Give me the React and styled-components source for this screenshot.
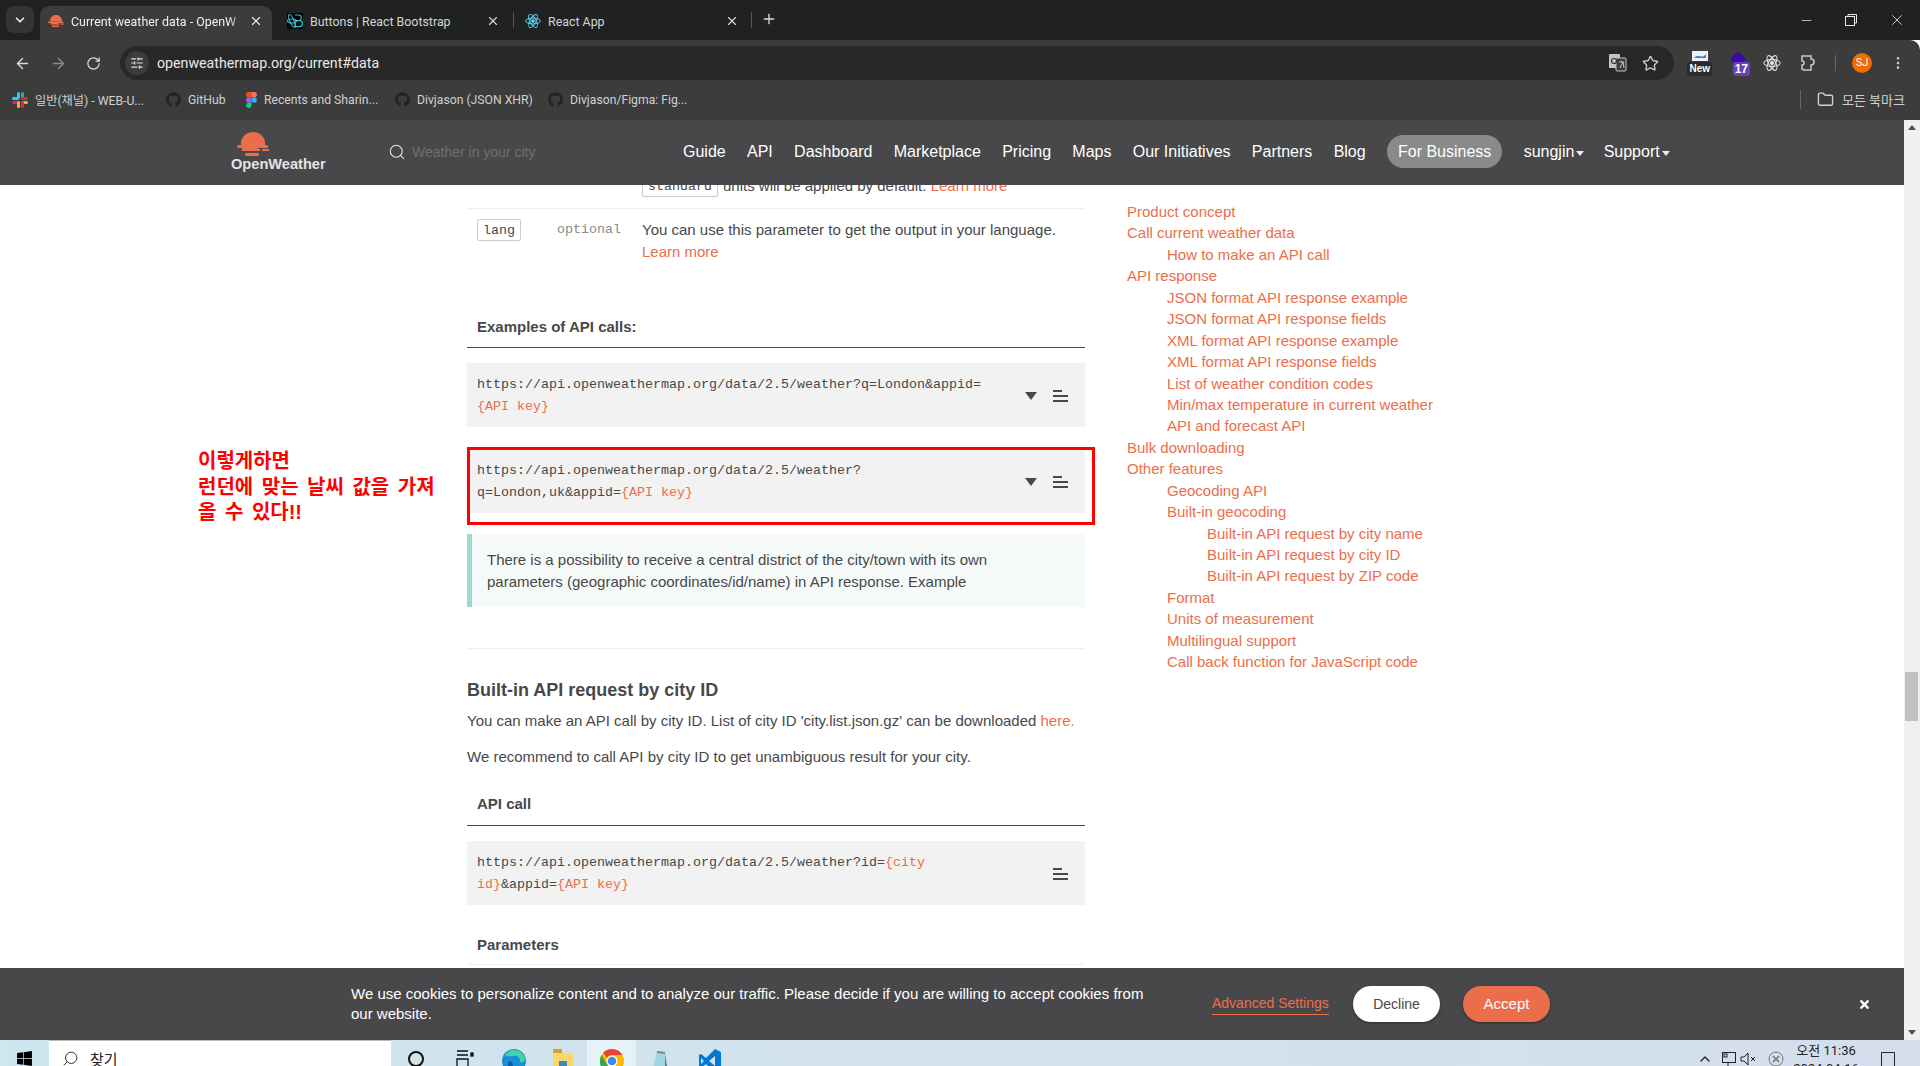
import React from 'react';
import styled, { createGlobalStyle } from 'styled-components';
import { ArrowLeft, ArrowRight, RotateCw, Star, Search, X, Plus, ChevronDown, ChevronUp, Minus, MoreVertical, Folder, SlidersHorizontal } from 'lucide-react';
import { FaGithub, FaWindows, FaTimes } from 'react-icons/fa';

const sans = '"Liberation Sans", Arial, "Noto Sans CJK KR", sans-serif';
const ui = 'Roboto, "Noto Sans CJK KR", sans-serif';
const mono = '"Liberation Mono", "Courier New", monospace';
const orange = '#eb6e4b';

const GlobalStyle = createGlobalStyle`
  html, body { margin: 0; padding: 0; height: 100%; overflow: hidden; background: #fff; }
  * { box-sizing: border-box; }
  #root { height: 1066px; }
`;

const Shell = styled.div`
  display: flex;
  flex-direction: column;
  height: 1066px;
  width: 1920px;
  overflow: hidden;
  font-family: ${sans};
`;

/* browser chrome */
const TabStrip = styled.div`
  display: flex;
  align-items: flex-end;
  height: 40px;
  flex: none;
  padding-left: 6px;
  background: #202221;
  color: #e8e8e8;
`;
const TabListBtn = styled.div`
  width: 28px;
  height: 27px;
  margin: 0 6px 7px 0;
  border-radius: 8px;
  background: #333534;
  display: flex;
  align-items: center;
  justify-content: center;
`;
const Tab = styled.div`
  display: flex;
  align-items: center;
  width: ${p => p.$w}px;
  height: 34px;
  padding: 1px ${p => p.$right}px 5px ${p => p.$left}px;
  font: 12.4px ${ui};
  border-radius: 9px 9px 0 0;
  background: ${p => (p.$active ? '#3c3c3c' : 'transparent')};
  color: ${p => (p.$active ? '#f0f0f0' : '#d4d4d4')};
`;
const TabTitle = styled.span`
  flex: 1;
  margin-left: 7px;
  white-space: nowrap;
  overflow: hidden;
  ${p => p.$fade && 'mask-image: linear-gradient(90deg, #000 88%, transparent 100%);'}
`;
const TabSep = styled.div`
  width: 1px;
  height: 16px;
  margin-bottom: 12px;
  background: #555;
`;
const NewTab = styled.div`
  width: 32px;
  height: 34px;
  padding: 5px 0 0 9px;
  margin-right: auto;
`;
const WinControls = styled.div`
  display: flex;
  align-self: flex-start;
  align-items: center;
  gap: 30px;
  height: 40px;
  padding-right: 14px;
`;

const Toolbar = styled.div`
  display: flex;
  align-items: flex-start;
  height: 46px;
  flex: none;
  padding: 6px 0 0 14px;
  background: #3c3c3c;
  border-radius: 0 10px 0 0;
`;
const NavIcon = styled.div`
  width: 36px;
  height: 34px;
  display: flex;
  align-items: center;
  color: ${p => (p.$dim ? '#8a8a8a' : '#dcdcdc')};
`;
const Omnibox = styled.div`
  display: flex;
  align-items: center;
  width: 1554px;
  height: 34px;
  margin-left: -2px;
  padding: 0 15px 0 5px;
  border-radius: 17px;
  background: #282828;
`;
const SiteBtn = styled.div`
  width: 24px;
  height: 24px;
  border-radius: 50%;
  background: #3c3c3c;
  display: flex;
  align-items: center;
  justify-content: center;
  color: #ddd;
`;
const Url = styled.span`
  flex: 1;
  margin-left: 8px;
  font: 14.2px ${ui};
  color: #e8e8e8;
`;
const OmniIcons = styled.div`
  display: flex;
  align-items: center;
  gap: 15px;
  color: #c8c8c8;
`;
const ExtIcons = styled.div`
  display: flex;
  align-items: center;
  height: 34px;
  color: #c8c8c8;
`;
const ExtSlot = styled.div`
  display: flex;
  margin-left: ${p => p.$ml}px;
`;
const ExtBox = styled.div`
  position: relative;
  width: 24px;
  height: 24px;
  display: flex;
  align-items: flex-start;
  justify-content: center;
`;
const ExtBadge = styled.span`
  position: absolute;
  bottom: -1px;
  right: ${p => p.$right}px;
  padding: 0 2px;
  border-radius: 3px;
  font: bold ${p => p.$size}px/14px ${sans};
  color: #fff;
  background: ${p => p.$bg};
`;
const ToolbarSep = styled.div`
  width: 1px;
  height: 16px;
  background: #666;
`;
const Avatar = styled.div`
  width: 20px;
  height: 20px;
  border-radius: 50%;
  background: #ef6c00;
  color: #fff;
  font: 11px/20px ${ui};
  text-align: center;
`;

const BookmarkBar = styled.div`
  display: flex;
  align-items: center;
  height: 34px;
  flex: none;
  padding: 0 15px 7px 12px;
  background: #3c3c3c;
  color: #d0d0d0;
  font: 12.2px ${ui};
`;
const Bookmark = styled.div`
  display: flex;
  align-items: center;
  gap: 7px;
  width: ${p => p.$w}px;
  white-space: nowrap;
`;
const AllBookmarks = styled.div`
  display: flex;
  align-items: center;
  gap: 8px;
  margin-left: auto;
  padding-left: 16px;
  font-size: 13px;
  border-left: 1px solid #666;
`;

/* page */
const Page = styled.div`
  display: flex;
  height: 920px;
  flex: none;
`;
const PageColumn = styled.div`
  display: flex;
  flex-direction: column;
  width: 1904px;
`;
const Scrollbar = styled.div`
  display: flex;
  flex-direction: column;
  align-items: center;
  justify-content: space-between;
  width: 16px;
  padding: 5px 0;
  position: relative;
  background: #f0f0f0;
`;
const Thumb = styled.div`
  position: absolute;
  top: 552px;
  left: 1px;
  width: 13px;
  height: 49px;
  background: #c0c0c0;
`;
const Arrow = styled.i`
  width: 0;
  height: 0;
  border-left: 4px solid transparent;
  border-right: 4px solid transparent;
  ${p => (p.$up ? 'border-bottom: 5px solid #505050;' : 'border-top: 5px solid #505050;')}
`;

const Nav = styled.nav`
  display: flex;
  align-items: center;
  height: 65px;
  flex: none;
  padding: 0 0 2px 231px;
  background: #48484a;
  color: #fff;
  font-size: 16px;
`;
const Logo = styled.div`
  display: flex;
  flex-direction: column;
  align-items: flex-start;
  width: 94px;
  padding-left: 6px;
`;
const LogoText = styled.span`
  margin: 1px 0 0 -6px;
  font: bold 14.6px/15px ${sans};
  color: #e4e4e4;
`;
const NavSearch = styled.div`
  display: flex;
  align-items: center;
  gap: 6px;
  width: 295px;
  margin-left: 63px;
  color: #e8e8e8;
`;
const SearchHint = styled.span`
  font-size: 14px;
  color: #6f6f71;
`;
const NavLinks = styled.div`
  display: flex;
  align-items: center;
  gap: 21.3px;
`;
const Pill = styled.div`
  display: flex;
  align-items: center;
  height: 33px;
  padding: 0 11px;
  border-radius: 17px;
  background: #8a8a8b;
`;
const Drop = styled.span`
  display: inline-flex;
  align-items: center;
  gap: 2px;
  & + & {
    margin-left: -2px;
  }
`;
const Caret = styled.i`
  width: 0;
  height: 0;
  margin-top: 3px;
  border-left: 4px solid transparent;
  border-right: 4px solid transparent;
  border-top: 5px solid #eee;
`;

const Content = styled.div`
  display: flex;
  flex: 1;
  overflow: hidden;
  color: #48484a;
  font-size: 15px;
  line-height: 22px;
`;
const NoteColumn = styled.div`
  width: 467px;
  flex: none;
  padding: 264px 0 0 198px;
  color: #f00;
  font: bold 20px/25.5px ${sans};
  word-spacing: 3px;
`;
const Main = styled.main`
  width: 618px;
  flex: none;
`;
const ClippedRow = styled.div`
  display: flex;
  align-items: flex-end;
  gap: 5px;
  height: 24px;
  padding: 0 0 11px 175px;
  border-bottom: 1px solid #eee;
  overflow: hidden;
`;
const ParamRow = styled.div`
  display: flex;
  padding: 10px 0 0 10px;
`;
const ParamName = styled.code`
  flex: none;
  height: 22px;
  padding: 0 5px;
  border: 1px solid #ccc;
  border-radius: 2px;
  font: 13.33px/21px ${mono};
  color: #48484a;
  background: #fff;
`;
const ParamKind = styled.span`
  flex: none;
  width: 85px;
  margin-left: 36px;
  font: 13.33px/22px ${mono};
  color: #8a8a8b;
`;
const A = styled.a`
  color: ${orange};
`;
const SubLabel = styled.div`
  margin-top: ${p => p.$top}px;
  padding: 0 0 ${p => p.$bottom}px 10px;
  font-weight: bold;
  border-bottom: 1px solid ${p => (p.$faint ? '#eee' : '#48484a')};
`;
const Code = styled.div`
  display: flex;
  align-items: center;
  height: 64px;
  margin-top: ${p => p.$top}px;
  padding: 1px 17px 0 10px;
  background: #f2f2f2;
  font: 13.33px/21.5px ${mono};
  color: #48484a;
`;
const CodeText = styled.div`
  flex: 1;
`;
const Key = styled.span`
  color: ${orange};
`;
const CodeDrop = styled.i`
  width: 0;
  height: 0;
  margin-right: 16px;
  border-left: 6px solid transparent;
  border-right: 6px solid transparent;
  border-top: 8px solid #48484a;
`;
const Highlighted = styled.div`
  position: relative;
  margin-top: 22px;
`;
const RedBox = styled.div`
  position: absolute;
  top: -2px;
  left: 0;
  right: -10px;
  height: 78px;
  border: 3px solid #f00;
`;
const Callout = styled.div`
  height: 73px;
  margin-top: 21px;
  padding: 15px 0 0 15px;
  border-left: 5px solid #9fd8d0;
  background: #f5faf9;
`;
const Rule = styled.hr`
  height: 1px;
  margin: 41px 0 0;
  border: 0;
  background: #eee;
`;
const Heading = styled.h3`
  margin: 30px 0 0;
  font: bold 18px/22px ${sans};
`;
const Para = styled.p`
  margin: ${p => p.$top}px 0 0;
`;
const Toc = styled.aside`
  padding: 16px 0 0 42px;
  font-size: 15px;
  line-height: 21.43px;
`;
const TocLink = styled.a`
  display: block;
  padding-left: ${p => p.$level * 40}px;
  color: ${orange};
`;

const Cookie = styled.div`
  display: flex;
  align-items: center;
  height: 72px;
  flex: none;
  padding-left: 351px;
  background: #48484a;
  color: #fff;
`;
const CookieText = styled.div`
  width: 861px;
  padding-right: 60px;
  font-size: 15px;
  line-height: 20px;
`;
const Advanced = styled.a`
  width: 141px;
  margin-top: 2px;
  font-size: 14px;
  color: ${orange};
  span {
    display: inline-block;
    padding-bottom: 3px;
    border-bottom: 1px solid ${orange};
  }
`;
const CookieBtn = styled.div`
  width: 87px;
  height: 36px;
  margin-right: 23px;
  border-radius: 18px;
  text-align: center;
  font-size: ${p => (p.$primary ? 15 : 14)}px;
  line-height: 36px;
  box-shadow: 0 1px 3px rgba(0, 0, 0, 0.4);
  color: ${p => (p.$primary ? '#fff' : '#48484a')};
  background: ${p => (p.$primary ? orange : '#fff')};
`;
const CookieClose = styled.div`
  margin-left: 285px;
  display: flex;
  color: #fff;
`;

/* windows taskbar, cut off by the bottom of the photo */
const Taskbar = styled.div`
  display: flex;
  align-items: flex-start;
  height: 26px;
  flex: none;
  overflow: hidden;
  background: linear-gradient(90deg, #cfe6ef, #d2e2ec 50%, #d5deec);
`;
const Start = styled.div`
  width: 49px;
  padding: 10px 0 0 16px;
  color: #000;
`;
const TaskSearch = styled.div`
  display: flex;
  align-items: flex-start;
  gap: 11px;
  width: 342px;
  height: 40px;
  padding: 9px 0 0 13px;
  background: #fff;
  border-top: 1px solid #bbb;
  font: 15px/21px ${ui};
  color: #222;
`;
const TaskApp = styled.div`
  width: 49px;
  height: 40px;
  padding-top: 9px;
  text-align: center;
  background: ${p => (p.$on ? '#e6f2f7' : 'transparent')};
`;
const Tray = styled.div`
  display: flex;
  align-items: flex-start;
  margin-left: auto;
  padding: 11px 24px 0 0;
  color: #222;
`;
const TrayItem = styled.div`
  display: flex;
  margin-right: ${p => p.$mr}px;
`;
const Clock = styled.div`
  width: 84px;
  margin: -9px 12px 0 0;
  text-align: center;
  font: 13px/18px ${ui};
`;

const tocItems = [
  ['Product concept', 0], ['Call current weather data', 0], ['How to make an API call', 1],
  ['API response', 0], ['JSON format API response example', 1], ['JSON format API response fields', 1],
  ['XML format API response example', 1], ['XML format API response fields', 1],
  ['List of weather condition codes', 1], ['Min/max temperature in current weather', 1],
  ['API and forecast API', 1], ['Bulk downloading', 0], ['Other features', 0],
  ['Geocoding API', 1], ['Built-in geocoding', 1], ['Built-in API request by city name', 2],
  ['Built-in API request by city ID', 2], ['Built-in API request by ZIP code', 2],
  ['Format', 1], ['Units of measurement', 1], ['Multilingual support', 1],
  ['Call back function for JavaScript code', 1],
];

const navItems = ['Guide', 'API', 'Dashboard', 'Marketplace', 'Pricing', 'Maps', 'Our Initiatives', 'Partners', 'Blog'];

function SunLogo({ h = 24, w = 32 }) {
  return (
    <svg width={w} height={h} viewBox="0 0 32 24">
      <path fill={orange} d="M16 0c6 0 11 4 12 10v3H4v-3C5 4 10 0 16 0z" />
      <rect x="0" y="13" width="31" height="3" rx="1.5" fill={orange} />
      <rect x="5" y="16" width="16" height="3" fill={orange} />
      <rect x="18" y="17" width="5" height="2" fill={orange} />
      <rect x="25" y="17" width="7" height="2" fill={orange} />
      <rect x="8" y="21" width="14" height="3" rx="1" fill={orange} />
    </svg>
  );
}

function ReactIcon({ color = '#61dafb', size = 16 }) {
  return (
    <svg width={size} height={size} viewBox="0 0 24 24" fill="none" stroke={color} strokeWidth="1.4">
      <circle cx="12" cy="12" r="2" fill={color} />
      <ellipse cx="12" cy="12" rx="11" ry="4.5" />
      <ellipse cx="12" cy="12" rx="11" ry="4.5" transform="rotate(60 12 12)" />
      <ellipse cx="12" cy="12" rx="11" ry="4.5" transform="rotate(120 12 12)" />
    </svg>
  );
}

function BootstrapIcon() {
  return (
    <svg width="16" height="16" viewBox="0 0 16 16">
      <rect width="16" height="16" fill="#000" />
      <g fill="none" stroke="#35c3dc" strokeWidth="1.1">
        <ellipse cx="5" cy="8" rx="4.5" ry="2" />
        <ellipse cx="5" cy="8" rx="7" ry="2" transform="rotate(65 5 8)" />
        <path d="M8 2h3.5a2.8 2.8 0 0 1 0 5.6H8m0 0h4.5a3 3 0 0 1 0 6H8z" />
      </g>
    </svg>
  );
}

function SlackIcon() {
  return (
    <svg width="16" height="16" viewBox="0 0 16 16">
      <rect x="5" y="0" width="3" height="7" rx="1.5" fill="#36c5f0" />
      <rect x="0" y="5" width="7" height="3" rx="1.5" fill="#36c5f0" />
      <rect x="9" y="0" width="3" height="7" rx="1.5" fill="#2eb67d" />
      <rect x="9" y="5" width="7" height="3" rx="1.5" fill="#e01e5a" />
      <rect x="0" y="9" width="7" height="3" rx="1.5" fill="#e01e5a" />
      <rect x="5" y="9" width="3" height="7" rx="1.5" fill="#ecb22e" />
      <rect x="9" y="9" width="7" height="3" rx="1.5" fill="#ecb22e" />
      <rect x="9" y="9" width="3" height="7" rx="1.5" fill="#e01e5a" />
    </svg>
  );
}

function FigmaIcon() {
  return (
    <svg width="11" height="16" viewBox="0 0 12 18">
      <path fill="#f24e1e" d="M0 3a3 3 0 0 1 3-3h3v6H3a3 3 0 0 1-3-3z" />
      <path fill="#ff7262" d="M6 0h3a3 3 0 0 1 0 6H6z" />
      <path fill="#a259ff" d="M0 9a3 3 0 0 1 3-3h3v6H3a3 3 0 0 1-3-3z" />
      <circle cx="9" cy="9" r="3" fill="#1abcfe" />
      <path fill="#0acf83" d="M0 15a3 3 0 0 1 3-3h3v3a3 3 0 0 1-6 0z" />
    </svg>
  );
}

function TranslateIcon() {
  return (
    <svg width="18" height="18" viewBox="0 0 18 18">
      <rect x="0" y="0" width="11" height="14" rx="1" fill="#c4c4c4" />
      <rect x="7" y="4" width="10" height="13" rx="1" fill="#3c3c3c" stroke="#c4c4c4" />
      <circle cx="5" cy="7" r="2.5" fill="none" stroke="#333" strokeWidth="1.2" />
      <path d="M10 8h5M12.5 7v1M11 14l3-6 1 6" stroke="#c4c4c4" fill="none" />
    </svg>
  );
}

function PuzzleIcon() {
  return (
    <svg width="18" height="18" viewBox="0 0 18 18" fill="none" stroke="#c8c8c8" strokeWidth="1.5">
      <path d="M2 2h9v3a2.2 2.2 0 0 1 0 6v5H4l-2-1v-4a2 2 0 0 0 0-4z" />
    </svg>
  );
}

function MenuLines() {
  return (
    <svg width="15" height="12" viewBox="0 0 15 12">
      <rect x="0" y="0" width="9" height="2" fill="#48484a" />
      <rect x="0" y="5" width="15" height="2" fill="#48484a" />
      <rect x="0" y="10" width="15" height="2" fill="#48484a" />
    </svg>
  );
}

function EdgeIcon() {
  return (
    <svg width="24" height="24" viewBox="0 0 24 24">
      <circle cx="12" cy="12" r="12" fill="#1a8fd6" />
      <path fill="#41d3a2" d="M3 6a11 11 0 0 1 20 4c0 3-3 4-5 3 1-4-3-7-7-6-3 0-6 1-8-1z" />
      <path fill="#0c5aa6" d="M10 13c0 5 4 8 8 7l-3 3C8 25 4 18 7 12z" />
    </svg>
  );
}

function FolderApp() {
  return (
    <svg width="22" height="24" viewBox="0 0 22 24">
      <rect x="1" y="0" width="9" height="5" fill="#d9a227" />
      <rect x="1" y="4" width="20" height="20" fill="#fbd66a" />
      <rect x="7" y="12" width="8" height="12" fill="#3b87c4" />
    </svg>
  );
}

function ChromeIcon() {
  return (
    <svg width="24" height="24" viewBox="0 0 24 24">
      <circle cx="12" cy="12" r="12" fill="#fbbc04" />
      <path fill="#ea4335" d="M12 0a12 12 0 0 1 10.4 6H12a6 6 0 0 0-5.2 3L3.3 3.6A12 12 0 0 1 12 0z" />
      <path fill="#34a853" d="M1.6 6l5.2 9a6 6 0 0 0 5.2 3l-3.6 5.7A12 12 0 0 1 1.6 6z" />
      <circle cx="12" cy="12" r="5.5" fill="#fff" />
      <circle cx="12" cy="12" r="4.3" fill="#4285f4" />
    </svg>
  );
}

function NotepadApp() {
  return (
    <svg width="24" height="24" viewBox="0 0 24 24">
      <path fill="#9fd6e0" d="M3 24 8 2l8 1 3 21z" />
      <path fill="#7a8b90" d="M8 2l8 1v2L8 4z" />
      <path fill="#5d7d86" d="M16 5l3 19h-3z" />
    </svg>
  );
}

function VsCodeIcon() {
  return (
    <svg width="24" height="24" viewBox="0 0 24 24">
      <path fill="#0078d4" d="M17 0l6 3v18l-6 3-9-9-5 4-2-1V6l2-1 5 4zM17 7l-6 5 6 5zM3 9v6l3-3z" />
    </svg>
  );
}

export default function App() {
  return (
    <Shell>
      <GlobalStyle />
      <TabStrip>
        <TabListBtn><ChevronDown size={14} color="#e8e8e8" strokeWidth={3} /></TabListBtn>
        <Tab $active $w={232} $left={8} $right={9}>
          <SunLogo h={12} w={16} />
          <TabTitle $fade>Current weather data - OpenW</TabTitle>
          <X size={14} />
        </Tab>
        <Tab $w={241} $left={15} $right={13}>
          <BootstrapIcon />
          <TabTitle>Buttons | React Bootstrap</TabTitle>
          <X size={14} />
        </Tab>
        <TabSep />
        <Tab $w={237} $left={11} $right={12}>
          <ReactIcon />
          <TabTitle>React App</TabTitle>
          <X size={14} />
        </Tab>
        <TabSep />
        <NewTab><Plus size={16} color="#ddd" /></NewTab>
        <WinControls>
          <Minus size={15} strokeWidth={1.2} />
          <svg width="14" height="14" viewBox="0 0 14 14" fill="none" stroke="#e8e8e8">
            <rect x="1.5" y="3.5" width="9" height="9" />
            <path d="M4 3V1.5h8.5V10H11" />
          </svg>
          <X size={18} strokeWidth={1.1} />
        </WinControls>
      </TabStrip>

      <Toolbar>
        <NavIcon><ArrowLeft size={17} /></NavIcon>
        <NavIcon $dim><ArrowRight size={17} /></NavIcon>
        <NavIcon><RotateCw size={15} /></NavIcon>
        <Omnibox>
          <SiteBtn><SlidersHorizontal size={14} /></SiteBtn>
          <Url>openweathermap.org/current#data</Url>
          <OmniIcons>
            <TranslateIcon />
            <Star size={17} />
          </OmniIcons>
        </Omnibox>
        <ExtIcons>
          <ExtSlot $ml={14}>
            <ExtBox>
              <svg width="16" height="10" viewBox="0 0 16 10"><rect width="16" height="10" fill="#eef" /><path d="M2 7c4-5 8 2 12-4v4H2z" fill="#3a7fc4" /></svg>
              <ExtBadge $bg="#2a2a2a" $right={0} $size={10}>New</ExtBadge>
            </ExtBox>
          </ExtSlot>
          <ExtSlot $ml={14}>
            <ExtBox>
              <svg width="18" height="18" viewBox="0 0 18 18"><path d="M9 0l8 8-8 8-8-8z" fill="#3d0a9e" /></svg>
              <ExtBadge $bg="#6a3fc0" $right={0} $size={12}>17</ExtBadge>
            </ExtBox>
          </ExtSlot>
          <ExtSlot $ml={13}><ReactIcon color="#e4e4e4" size={18} /></ExtSlot>
          <ExtSlot $ml={19}><PuzzleIcon /></ExtSlot>
          <ExtSlot $ml={17}><ToolbarSep /></ExtSlot>
          <ExtSlot $ml={16}><Avatar>SJ</Avatar></ExtSlot>
          <ExtSlot $ml={18}><MoreVertical size={16} /></ExtSlot>
        </ExtIcons>
      </Toolbar>

      <BookmarkBar>
        <Bookmark $w={154}><SlackIcon /><span>일반(채널) - WEB-U...</span></Bookmark>
        <Bookmark $w={80}><FaGithub size={15} color="#222" /><span>GitHub</span></Bookmark>
        <Bookmark $w={149}><FigmaIcon /><span>Recents and Sharin...</span></Bookmark>
        <Bookmark $w={153}><FaGithub size={15} color="#222" /><span>Divjason (JSON XHR)</span></Bookmark>
        <Bookmark><FaGithub size={15} color="#222" /><span>Divjason/Figma: Fig...</span></Bookmark>
        <AllBookmarks><Folder size={17} /><span>모든 북마크</span></AllBookmarks>
      </BookmarkBar>

      <Page>
        <PageColumn>
          <Nav>
            <Logo>
              <SunLogo />
              <LogoText>OpenWeather</LogoText>
            </Logo>
            <NavSearch>
              <Search size={18} strokeWidth={1.4} />
              <SearchHint>Weather in your city</SearchHint>
            </NavSearch>
            <NavLinks>
              {navItems.map(item => <span key={item}>{item}</span>)}
              <Pill>For Business</Pill>
              <Drop>sungjin<Caret /></Drop>
              <Drop>Support<Caret /></Drop>
            </NavLinks>
          </Nav>

          <Content>
            <NoteColumn>
              이렇게하면<br />
              런던에 맞는 날씨 값을 가져<br />
              올 수 있다!!
            </NoteColumn>
            <Main>
              <ClippedRow>
                <ParamName>standard</ParamName>
                <span>units will be applied by default. <A>Learn more</A></span>
              </ClippedRow>
              <ParamRow>
                <ParamName>lang</ParamName>
                <ParamKind>optional</ParamKind>
                <div>
                  You can use this parameter to get the output in your language.<br />
                  <A>Learn more</A>
                </div>
              </ParamRow>
              <SubLabel $top={53} $bottom={9}>Examples of API calls:</SubLabel>
              <Code $top={15}>
                <CodeText>
                  https://api.openweathermap.org/data/2.5/weather?q=London&amp;appid=<br />
                  <Key>{'{API key}'}</Key>
                </CodeText>
                <CodeDrop />
                <MenuLines />
              </Code>
              <Highlighted>
                <Code $top={0}>
                  <CodeText>
                    https://api.openweathermap.org/data/2.5/weather?<br />
                    q=London,uk&amp;appid=<Key>{'{API key}'}</Key>
                  </CodeText>
                  <CodeDrop />
                  <MenuLines />
                </Code>
                <RedBox />
              </Highlighted>
              <Callout>
                There is a possibility to receive a central district of the city/town with its own<br />
                parameters (geographic coordinates/id/name) in API response. Example
              </Callout>
              <Rule />
              <Heading>Built-in API request by city ID</Heading>
              <Para $top={9}>You can make an API call by city ID. List of city ID 'city.list.json.gz' can be downloaded <A>here.</A></Para>
              <Para $top={14}>We recommend to call API by city ID to get unambiguous result for your city.</Para>
              <SubLabel $top={25} $bottom={10}>API call</SubLabel>
              <Code $top={15}>
                <CodeText>
                  https://api.openweathermap.org/data/2.5/weather?id=<Key>{'{city'}</Key><br />
                  <Key>{'id}'}</Key>&amp;appid=<Key>{'{API key}'}</Key>
                </CodeText>
                <MenuLines />
              </Code>
              <SubLabel $top={29} $bottom={8} $faint>Parameters</SubLabel>
            </Main>
            <Toc>
              {tocItems.map(([label, level]) => <TocLink key={label} $level={level}>{label}</TocLink>)}
            </Toc>
          </Content>

          <Cookie>
            <CookieText>
              We use cookies to personalize content and to analyze our traffic. Please decide if you are willing to accept cookies from our website.
            </CookieText>
            <Advanced><span>Advanced Settings</span></Advanced>
            <CookieBtn>Decline</CookieBtn>
            <CookieBtn $primary>Accept</CookieBtn>
            <CookieClose><FaTimes size={13} /></CookieClose>
          </Cookie>
        </PageColumn>
        <Scrollbar>
          <Arrow $up />
          <Thumb />
          <Arrow />
        </Scrollbar>
      </Page>

      <Taskbar>
        <Start><FaWindows size={17} /></Start>
        <TaskSearch><Search size={17} strokeWidth={1.3} style={{ transform: 'scaleX(-1)' }} /><span>찾기</span></TaskSearch>
        <TaskApp><svg width="20" height="20" viewBox="0 0 20 20" fill="none" stroke="#111" strokeWidth="2"><circle cx="10" cy="10" r="7" /></svg></TaskApp>
        <TaskApp><svg width="18" height="20" viewBox="0 0 18 20" fill="none" stroke="#111" strokeWidth="1.3"><path d="M1 2h11M1 6h11M1 10h11v8H1z" /><rect x="15" y="4" width="2" height="3" fill="#111" /></svg></TaskApp>
        <TaskApp><EdgeIcon /></TaskApp>
        <TaskApp><FolderApp /></TaskApp>
        <TaskApp $on><ChromeIcon /></TaskApp>
        <TaskApp><NotepadApp /></TaskApp>
        <TaskApp><VsCodeIcon /></TaskApp>
        <Tray>
          <TrayItem $mr={8}><ChevronUp size={16} /></TrayItem>
          <TrayItem $mr={3}><svg width="16" height="16" viewBox="0 0 16 16" fill="none" stroke="#222"><rect x="1.5" y="1.5" width="13" height="10" /><rect x="3" y="3" width="3" height="3" /><path d="M7 12v3" /></svg></TrayItem>
          <TrayItem $mr={12}><svg width="16" height="16" viewBox="0 0 16 16" fill="none" stroke="#222"><path d="M1 6h3l4-4v12l-4-4H1zM11 6l4 4M15 6l-4 4" /></svg></TrayItem>
          <TrayItem $mr={0}><svg width="16" height="16" viewBox="0 0 16 16" fill="none" stroke="#777"><circle cx="8" cy="8" r="7" /><path d="M5 5l6 6M11 5l-6 6" strokeWidth="1.6" /></svg></TrayItem>
          <Clock>오전 11:36<br />2024-04-16</Clock>
          <svg width="16" height="20" viewBox="0 0 16 20" fill="none" stroke="#222"><path d="M1.5 1.5h13v14H10l-2 3-2-3H1.5z" /></svg>
        </Tray>
      </Taskbar>
    </Shell>
  );
}
